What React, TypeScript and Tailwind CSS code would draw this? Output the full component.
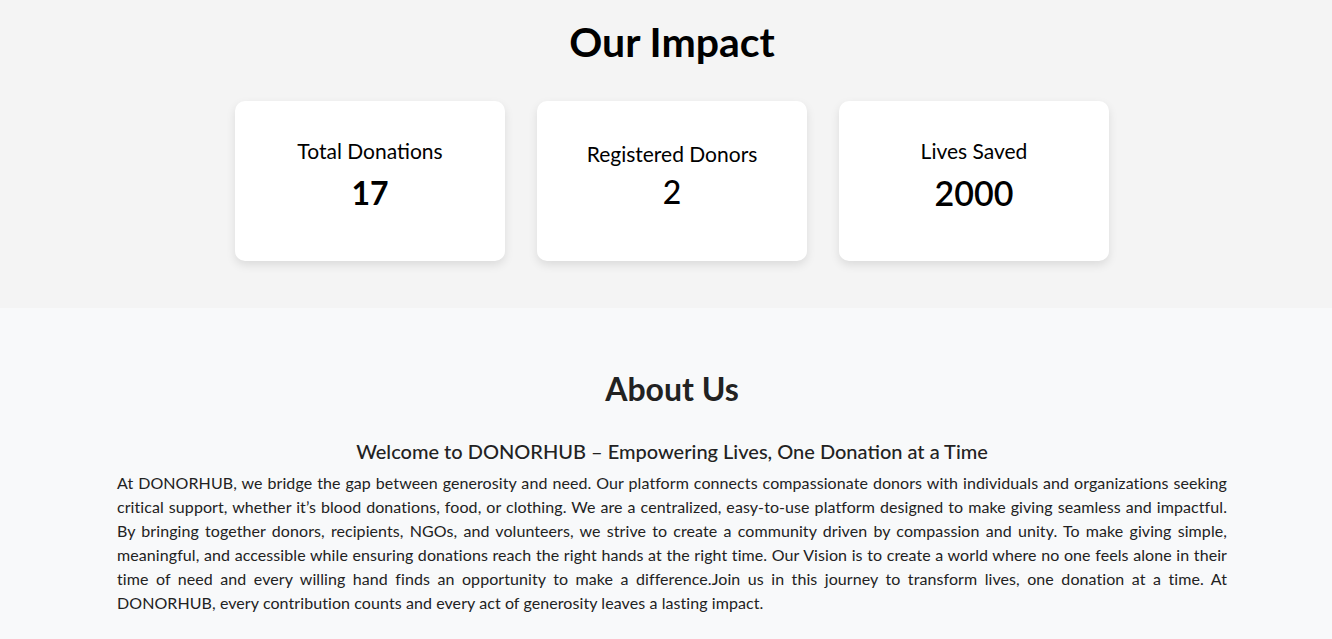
import React from "react";

const stats = [
  { label: "Total Donations", value: "17", valueClass: "mt-[8px] text-[32px] font-bold", labelPad: "pt-[36px]" },
  { label: "Registered Donors", value: "2", valueClass: "mt-[4px] text-[32px] font-medium", labelPad: "pt-[39px]" },
  { label: "Lives Saved", value: "2000", valueClass: "mt-[8px] text-[34px] font-semibold", labelPad: "pt-[36px]" },
];

const aboutText =
  "At DONORHUB, we bridge the gap between generosity and need. Our platform connects compassionate donors with individuals and organizations seeking critical support, whether it’s blood donations, food, or clothing. We are a centralized, easy-to-use platform designed to make giving seamless and impactful. By bringing together donors, recipients, NGOs, and volunteers, we strive to create a community driven by compassion and unity. To make giving simple, meaningful, and accessible while ensuring donations reach the right hands at the right time. Our Vision is to create a world where no one feels alone in their time of need and every willing hand finds an opportunity to make a difference.Join us in this journey to transform lives, one donation at a time. At DONORHUB, every contribution counts and every act of generosity leaves a lasting impact.";

const App: React.FC = () => {
  return (
    <div className="min-h-screen bg-[#f8f9fa] font-['Lato','Open_Sans',sans-serif]">
      <section className="bg-[#f4f4f4] pl-3 pt-[18px] pb-[47px]">
        <h2 className="text-center text-[41px] leading-[48px] font-bold text-black">Our Impact</h2>
        <div className="mt-[35px] flex justify-center gap-8">
          {stats.map((s) => (
            <div
              key={s.label}
              className={`flex h-[160px] w-[270px] flex-col items-center rounded-[10px] bg-white shadow-[0_4px_10px_rgba(0,0,0,0.1)] ${s.labelPad}`}
            >
              <p className="text-[21px] leading-[28px] text-black">{s.label}</p>
              <p className={`leading-[40px] text-black ${s.valueClass}`}>{s.value}</p>
            </div>
          ))}
        </div>
      </section>

      <section className="bg-[#f8f9fa] pl-3 pt-[61px] pb-8">
        <h2 className="text-center text-[32px] leading-[40px] font-bold text-[#222]">About Us</h2>
        <h3 className="mt-7 text-center text-[20px] leading-[28px] font-medium text-[#222]">
          Welcome to DONORHUB – Empowering Lives, One Donation at a Time
        </h3>
        <p className="mx-auto mt-[6px] w-[1110px] text-justify text-[16px] leading-[24px] tracking-[0.08px] text-[#222]">
          {aboutText}
        </p>
      </section>
    </div>
  );
};

export default App;
